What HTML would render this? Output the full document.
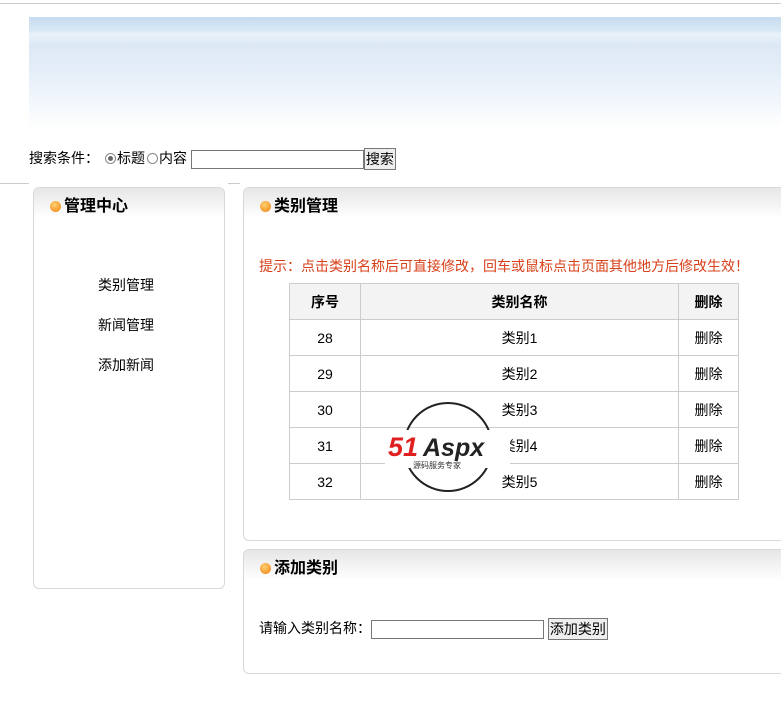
<!DOCTYPE html><html><head><meta charset="utf-8"><style>
body{margin:0;width:781px;height:719px;overflow:hidden;background:#fff;font-family:"Liberation Sans","Noto Sans CJK SC",sans-serif;font-size:14px;color:#000;position:relative}
.a{position:absolute}
.panel{position:absolute;border:1px solid #d8d8d8;border-radius:6px;background:#fff;overflow:hidden}
.hd{height:30px;background:linear-gradient(#e6e6e6,#fff);font-size:16px;font-weight:bold;line-height:38px;padding-left:16px}
.dot{display:inline-block;width:11px;height:11px;border-radius:50%;background:radial-gradient(circle at 40% 35%,#ffd070,#f08010);vertical-align:-1px;margin-right:3px}
table{border-collapse:collapse;position:absolute;left:289px;top:283px;width:450px}
td,th{border:1px solid #ccc;text-align:center;height:35px;padding:0;font-size:14px}
th{background:#f3f3f3}
input[type=text]{border:1px solid #777;height:19px;padding:0;box-sizing:border-box}
button{font:14px "Liberation Sans","Noto Sans CJK SC",sans-serif;border:1px solid #777;background:#eee;padding:0 1px;height:22px}
.r{display:inline-block;width:11px;height:11px;border:1px solid #888;border-radius:50%;box-sizing:border-box;vertical-align:-1px;margin:0 1px 0 2px;position:relative}
.r.on::after{content:"";position:absolute;left:2px;top:2px;width:5px;height:5px;border-radius:50%;background:#666}
</style></head><body>
<div class="a" style="left:0;top:3px;width:781px;height:1px;background:#ccc"></div>
<div class="a" style="left:29px;top:17px;width:752px;height:113px;background:linear-gradient(#c6dcf0 0%,#d8e8f5 12%,#eaf2fa 15%,#dce9f5 25%,#e8f0f9 55%,#fff 100%)"></div>
<div class="a" style="left:29px;top:147px;line-height:22px">搜索条件：<span class="r on" style="margin-left:6px"></span>标题<span class="r"></span>内容 <input type="text" style="width:173px;vertical-align:middle"><button style="vertical-align:middle">搜索</button></div>
<div class="a" style="left:0;top:183px;width:29px;height:1px;background:#ccc"></div>
<div class="a" style="left:228px;top:183px;width:12px;height:1px;background:#ccc"></div>
<div class="panel" style="left:33px;top:187px;width:190px;height:400px"><div class="hd"><span class="dot"></span>管理中心</div>
<div class="a" style="left:64px;top:87px">类别管理</div><div class="a" style="left:64px;top:127px">新闻管理</div><div class="a" style="left:64px;top:167px">添加新闻</div></div>
<div class="panel" style="left:243px;top:187px;width:545px;height:352px"><div class="hd"><span class="dot"></span>类别管理</div>
<div class="a" style="left:15px;top:68px;color:#d8401a">提示：点击类别名称后可直接修改，回车或鼠标点击页面其他地方后修改生效！</div></div>
<table><tr><th style="width:70px">序号</th><th>类别名称</th><th style="width:59px">删除</th></tr>
<tr><td>28</td><td>类别1</td><td>删除</td></tr><tr><td>29</td><td>类别2</td><td>删除</td></tr><tr><td>30</td><td>类别3</td><td>删除</td></tr><tr><td>31</td><td>类别4</td><td>删除</td></tr><tr><td>32</td><td>类别5</td><td>删除</td></tr></table>
<svg class="a" style="left:385px;top:400px" width="130" height="95"><circle cx="63" cy="47" r="44" fill="none" stroke="#222" stroke-width="2"/><rect x="0" y="30" width="125" height="38" fill="#fff"/>
<text x="3" y="56" font-family="Liberation Sans" font-style="italic" font-weight="bold" font-size="27" fill="#e02020">51</text><text x="38" y="56" font-family="Liberation Sans" font-style="italic" font-weight="bold" font-size="25" fill="#222">Aspx</text>
<text x="28" y="68" font-size="8" fill="#333" font-family="Noto Sans CJK SC">源码服务专家</text></svg>
<div class="panel" style="left:243px;top:549px;width:545px;height:123px"><div class="hd"><span class="dot"></span>添加类别</div>
<div class="a" style="left:15px;top:67px;line-height:22px">请输入类别名称：<input type="text" style="width:173px;vertical-align:middle"> <button style="vertical-align:middle">添加类别</button></div></div>
</body></html>
